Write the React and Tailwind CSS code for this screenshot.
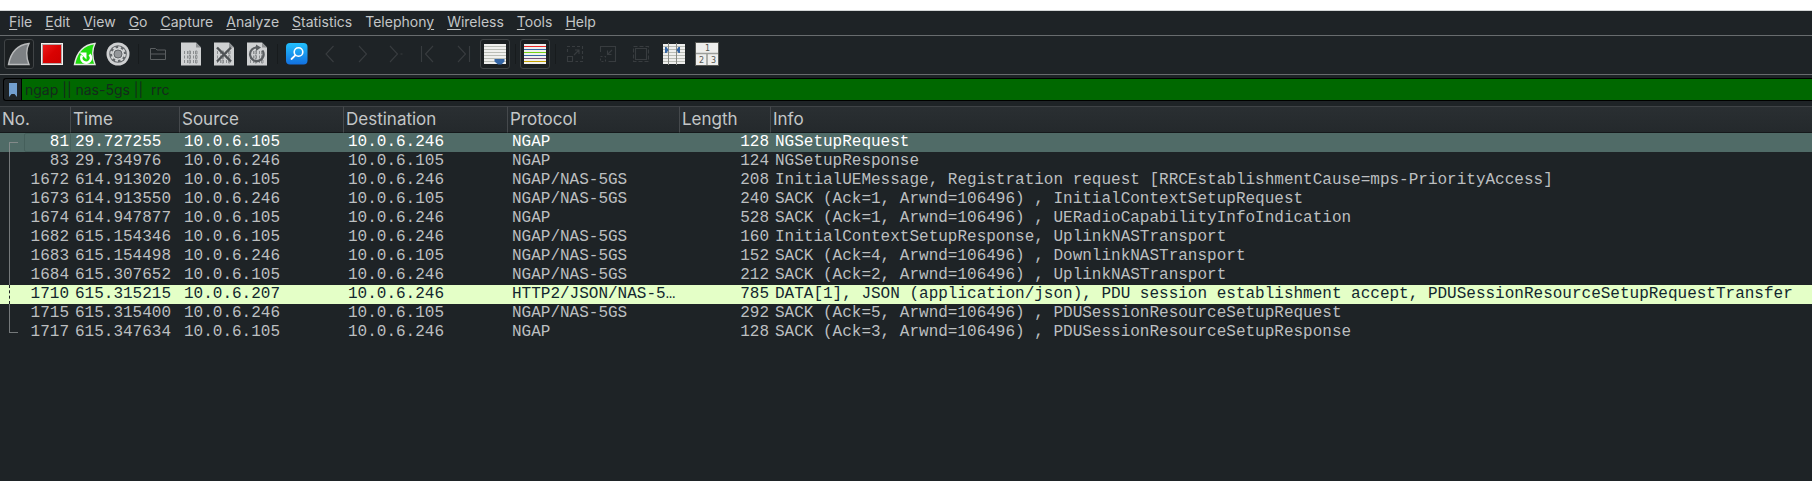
import React from "react";

const MENUS = [
  ["", "F", "ile"],
  ["", "E", "dit"],
  ["", "V", "iew"],
  ["", "G", "o"],
  ["", "C", "apture"],
  ["", "A", "nalyze"],
  ["", "S", "tatistics"],
  ["Telephon", "y", ""],
  ["", "W", "ireless"],
  ["", "T", "ools"],
  ["", "H", "elp"],
];

const COLUMNS = ["No.", "Time", "Source", "Destination", "Protocol", "Length", "Info"];

const A = "10.0.6.105";
const B = "10.0.6.246";
const PACKETS = [
  [81, "29.727255", A, B, "NGAP", 128, "NGSetupRequest"],
  [83, "29.734976", B, A, "NGAP", 124, "NGSetupResponse"],
  [1672, "614.913020", A, B, "NGAP/NAS-5GS", 208, "InitialUEMessage, Registration request [RRCEstablishmentCause=mps-PriorityAccess]"],
  [1673, "614.913550", B, A, "NGAP/NAS-5GS", 240, "SACK (Ack=1, Arwnd=106496) , InitialContextSetupRequest"],
  [1674, "614.947877", A, B, "NGAP", 528, "SACK (Ack=1, Arwnd=106496) , UERadioCapabilityInfoIndication"],
  [1682, "615.154346", A, B, "NGAP/NAS-5GS", 160, "InitialContextSetupResponse, UplinkNASTransport"],
  [1683, "615.154498", B, A, "NGAP/NAS-5GS", 152, "SACK (Ack=4, Arwnd=106496) , DownlinkNASTransport"],
  [1684, "615.307652", A, B, "NGAP/NAS-5GS", 212, "SACK (Ack=2, Arwnd=106496) , UplinkNASTransport"],
  [1710, "615.315215", "10.0.6.207", B, "HTTP2/JSON/NAS-5…", 785, "DATA[1], JSON (application/json), PDU session establishment accept, PDUSessionResourceSetupRequestTransfer"],
  [1715, "615.315400", B, A, "NGAP/NAS-5GS", 292, "SACK (Ack=5, Arwnd=106496) , PDUSessionResourceSetupRequest"],
  [1717, "615.347634", A, B, "NGAP", 128, "SACK (Ack=3, Arwnd=106496) , PDUSessionResourceSetupResponse"],
];

function Icon({ children }) {
  return (
    <svg viewBox="0 0 24 24" className="size-6" fill="none" aria-hidden="true">
      {children}
    </svg>
  );
}

const FIN = "M1.5 22.5C3.5 11.5 9 3 22 1.5c-3 6-3 13.500 0 21z";

const FinIcon = () => (
  <Icon>
    <path d={FIN} fill="#7d8184" stroke="#b9bbbc" strokeWidth="1.4" />
  </Icon>
);
const StopIcon = () => (
  <Icon>
    <defs>
      <linearGradient id="stop" x1="0" y1="0" x2="1" y2="1">
        <stop offset="0" stopColor="#ee1c1c" />
        <stop offset=".5" stopColor="#d90202" />
        <stop offset="1" stopColor="#cc0000" />
      </linearGradient>
    </defs>
    <rect x="1" y="1" width="22" height="22" fill="#f3f1ef" />
    <rect x="2.500" y="2.500" width="19" height="19" fill="url(#stop)" stroke="#b5a6a5" />
  </Icon>
);
const RestartIcon = () => (
  <Icon>
    <path d={FIN} fill="#1fdc0c" stroke="#e4e8e2" strokeWidth="1.4" />
    <path d="M9 13.500a4.800 4.800 0 1 0 7.500-1" stroke="#fff" strokeWidth="2.600" />
    <path d="M6.500 10.500h7v7z" fill="#fff" />
  </Icon>
);
const GearIcon = () => (
  <Icon>
    <circle cx="12" cy="12" r="11.500" fill="#cfd1d2" />
    <circle cx="12" cy="12" r="8.800" fill="#63676a" />
    <circle cx="12" cy="12" r="6.700" stroke="#d3d5d6" strokeWidth="2.200" strokeDasharray="2.760 2.500" />
    <circle cx="12" cy="12" r="5" stroke="#d3d5d6" strokeWidth="2" />
    <circle cx="12" cy="12" r="4" fill="#94979a" stroke="#63676a" />
  </Icon>
);
const FolderIcon = () => (
  <Icon>
    <path d="M4.500 17.500v-11h5l1.500 1.500h8.500v9.500zM4.500 12h15" stroke="#5a5e60" />
  </Icon>
);

function FileIcon({ mark }) {
  return (
    <Icon>
      <path d="M2 .500h15l5 5v18H2z" fill="#cfd1d2" />
      <path d="M17 .500l5 5h-5z" fill="#8f9294" />
      {[9, 13.500, 18].map((y) => (
        <path key={y} d={`M5.500 ${y}v3m3-3v3m1.500-3h1.500v3H10zm4.500 0v3m2-3h1.500v3h-1.500z`} stroke="#8b8e90" />
      ))}
      {mark === "close" && <path d="M5 5.500l14 14m0-14l-14 14" stroke="#4f5356" strokeWidth="2.400" />}
      {mark === "reload" && (
        <>
          <path d="M17.500 8.500a6.800 6.800 0 1 1-5-3" stroke="#5a5e61" strokeWidth="2.200" />
          <path d="M11 2.500l5 3-5 3.500z" fill="#5a5e61" />
        </>
      )}
    </Icon>
  );
}

const FindIcon = () => (
  <Icon>
    <defs>
      <linearGradient id="find" x1="0" y1="0" x2="0" y2="1">
        <stop offset="0" stopColor="#22c0fd" />
        <stop offset="1" stopColor="#1270e0" />
      </linearGradient>
    </defs>
    <rect x="1" y="1" width="21.500" height="21.500" rx="4" fill="url(#find)" />
    <circle cx="13.500" cy="10" r="4.300" stroke="#fff" strokeWidth="1.600" />
    <path d="M10.500 13.200L6.500 17" stroke="#fff" strokeWidth="1.800" strokeLinecap="round" />
  </Icon>
);

function Dim({ d, dash, children }) {
  return (
    <Icon>
      <g stroke="#383c3f" strokeWidth="1.100">
        <path d={d} strokeDasharray={dash} />
        {children}
      </g>
    </Icon>
  );
}

const ScrollIcon = () => (
  <Icon>
    <rect x="1" y="2" width="22" height="20" fill="#efefed" />
    {[4.500, 7.500, 10.500, 13.500, 16.500, 19.500].map((y) => (
      <path key={y} d={`M1 ${y}h22`} stroke="#babdb6" />
    ))}
    <path d="M11.500 17h10v2.500l-3 3h-3.500l-3.500-3z" fill="#3465a4" />
  </Icon>
);

const ColorIcon = () => (
  <Icon>
    <rect x="1" y="2" width="22" height="20" fill="#efefed" />
    {["#ef2929", "#3465a4", "#73d216", "#3465a4", "#75507b", "#c4a000"].map((c, i) => (
      <path key={i} d={`M1 ${4.500 + 3 * i}h22`} stroke={c} />
    ))}
  </Icon>
);

const ResizeIcon = () => (
  <Icon>
    <rect x="1" y="2" width="22" height="20" fill="#efefed" />
    {[4.500, 7.500, 10.500, 13.500, 16.500, 19.500].map((y) => (
      <path key={y} d={`M1 ${y}h22`} stroke="#babdb6" />
    ))}
    <path d="M6.500 1v22M14.500 1v22" stroke="#888a85" />
    <path d="M3 5h1.500l2 3-2 3H3zM18 5h-1.500l-2 3 2 3H18z" fill="#3465a4" />
  </Icon>
);

const LayoutIcon = () => (
  <Icon>
    <rect x=".500" y=".500" width="23" height="23" fill="#eeeeec" stroke="#555753" />
    <path d="M1 11.500h22M12 12v11" stroke="#9c9e9a" strokeWidth="1.600" />
    <g fill="#555753" fontFamily="DejaVu Sans, sans-serif" fontSize="8" textAnchor="middle">
      <text x="12.500" y="9">1</text>
      <text x="6.500" y="20.500">2</text>
      <text x="18.500" y="20.500">3</text>
    </g>
  </Icon>
);

const CORNER_BOX = "M4.500 10v-5.500h15v15h-7";

const TOOLS = [
  { label: "Start capture", icon: <FinIcon />, framed: true },
  { label: "Stop capture", icon: <StopIcon /> },
  { label: "Restart capture", icon: <RestartIcon /> },
  { label: "Capture options", icon: <GearIcon /> },
  null,
  { label: "Open", icon: <FolderIcon /> },
  { label: "Save", icon: <FileIcon /> },
  { label: "Close file", icon: <FileIcon mark="close" /> },
  { label: "Reload file", icon: <FileIcon mark="reload" /> },
  null,
  { label: "Find packet", icon: <FindIcon /> },
  { label: "Previous packet", icon: <Dim d="M15.500 4l-7.500 8 7.500 8" /> },
  { label: "Next packet", icon: <Dim d="M8 4l7.500 8-7.500 8" /> },
  { label: "Go to packet", icon: <Dim d="M6 4l7.500 8-7.500 8M16.500 12h2" /> },
  { label: "First packet", icon: <Dim d="M4.500 4v16M16 4l-7.500 8 7.500 8" /> },
  { label: "Last packet", icon: <Dim d="M19.500 4v16M8 4l7.500 8-7.500 8" /> },
  { label: "Auto scroll", icon: <ScrollIcon />, framed: true },
  null,
  { label: "Colorize", icon: <ColorIcon />, framed: true },
  null,
  { label: "Zoom in", icon: <Dim d={CORNER_BOX} dash="3 2"><path d="M4.500 14.500h5v5h-5zM11 13l5-5M12 8h4v4" /></Dim> },
  { label: "Zoom out", icon: <Dim d={CORNER_BOX}><path d="M4.500 14.500h5v5h-5z" strokeDasharray="2 2" /><path d="M16 8l-4.500 4.500M11.500 8.500v4h4" /></Dim> },
  { label: "Normal size", icon: <Dim d="M4.500 4.500h15v15h-15z" dash="4 2"><path d="M6.500 6.500h11v11h-11z" /></Dim> },
  { label: "Resize columns", icon: <ResizeIcon /> },
  { label: "Reset layout", icon: <LayoutIcon /> },
];

function Toolbar() {
  return (
    <div className="flex h-[39px] items-start gap-[3px] border-b border-[#686c6e] px-1 pt-[3px]">
      {TOOLS.map((tool, i) =>
        tool ? (
          <button
            key={i}
            type="button"
            aria-label={tool.label}
            className={`flex size-[30px] shrink-0 items-center justify-center rounded-[3px] border ${
              tool.framed ? "border-[#404446] bg-[#1b1f21]" : "border-transparent"
            }`}
          >
            {tool.icon}
          </button>
        ) : (
          <span key={i} className="flex h-[30px] w-1 shrink-0 items-center justify-center">
            <span className="h-5 w-px bg-[#171b1d]" />
          </span>
        )
      )}
    </div>
  );
}

function Thread({ index, highlighted }) {
  const first = index === 0;
  const last = index === PACKETS.length - 1;
  const line = first
    ? "self-end h-[10px] border-t border-[#838a8a]"
    : last
      ? "self-start h-[10px] border-b border-[#74787a]"
      : highlighted
        ? "h-full border-dashed border-[#1e2326]"
        : "h-full border-[#74787a]";
  return <span className={`ml-[9px] w-[9px] shrink-0 border-l ${line}`} />;
}

function PacketRow({ packet, index }) {
  const [no, time, source, destination, protocol, length, info] = packet;
  const selected = index === 0;
  const highlighted = no === 1710;
  const tone = selected
    ? "bg-[#506b67] text-white"
    : highlighted
      ? "bg-[#e4ffc7] text-[#12272e]"
      : "text-[#bcbfc0]";
  return (
    <tr className={`h-[19px] ${tone}`}>
      <td className="p-0">
        <div className="flex h-[19px] items-center justify-between">
          <Thread index={index} highlighted={highlighted} />
          <span
            className={`h-[19px] w-[47px] shrink-0 rounded-[2px] border pr-px text-right leading-[17px] ${
              selected ? "border-[#455f5b]" : "border-transparent"
            }`}
          >
            {no}
          </span>
        </div>
      </td>
      <td className="py-0 pl-1">{time}</td>
      <td className="py-0 pl-1">{source}</td>
      <td className="py-0 pl-1">{destination}</td>
      <td className="py-0 pl-1">{protocol}</td>
      <td className="py-0 pr-[2px] text-right">{length}</td>
      <td className="truncate py-0 pl-1">{info}</td>
    </tr>
  );
}

export default function App() {
  return (
    <div className="flex min-h-screen flex-col border-t-[10px] border-white bg-[#1e2326] font-['Inter',sans-serif] text-[#c3c6c7]">
      <nav className="flex h-[26px] items-center gap-[13px] border-t border-b border-t-[#d3d6d6] border-b-[#686c6e] px-[9px] pb-[2px] text-[14px] leading-4">
        {MENUS.map(([before, key, after]) => (
          <button key={before + key + after} type="button">
            {before}
            <span className="underline underline-offset-2">{key}</span>
            {after}
          </button>
        ))}
      </nav>
      <Toolbar />
      <div className="pt-[3px] pb-[5px] pl-[3px]">
        <div className="flex h-[23px] rounded-l-[3px] border-y border-l border-black">
          <button type="button" aria-label="Filter bookmarks" className="flex w-[18px] items-center justify-center border-r border-black">
            <svg viewBox="0 0 8 14" className="h-[14px] w-2" aria-hidden="true">
              <path d="M0 0h8v14l-2.500-3h-3L0 14z" fill="#729fcf" />
            </svg>
          </button>
          <input
            aria-label="Display filter"
            defaultValue="ngap || nas-5gs ||  rrc"
            className="min-w-0 flex-1 bg-[#006800] pl-[3px] text-[14px] text-[#142a1c] outline-none"
          />
        </div>
      </div>
      <table className="w-full table-fixed border-separate border-spacing-0 font-['Liberation_Mono',monospace] text-[16px] leading-[19px] whitespace-nowrap">
        <colgroup>
          <col className="w-[71px]" />
          <col className="w-[109px]" />
          <col className="w-[164px]" />
          <col className="w-[164px]" />
          <col className="w-[172px]" />
          <col className="w-[91px]" />
          <col />
        </colgroup>
        <thead>
          <tr className="h-[27px] font-['Inter',sans-serif] text-[17px]">
            {COLUMNS.map((name) => (
              <th
                key={name}
                className="border-t border-r border-b border-t-[#3e4245] border-r-[#45494c] border-b-[#15191b] bg-linear-to-b from-[#2a2f32] to-[#24292c] py-0 pl-[2px] text-left font-normal last:border-r-0"
              >
                {name}
              </th>
            ))}
          </tr>
        </thead>
        <tbody>
          {PACKETS.map((packet, index) => (
            <PacketRow key={packet[0]} packet={packet} index={index} />
          ))}
        </tbody>
      </table>
    </div>
  );
}
